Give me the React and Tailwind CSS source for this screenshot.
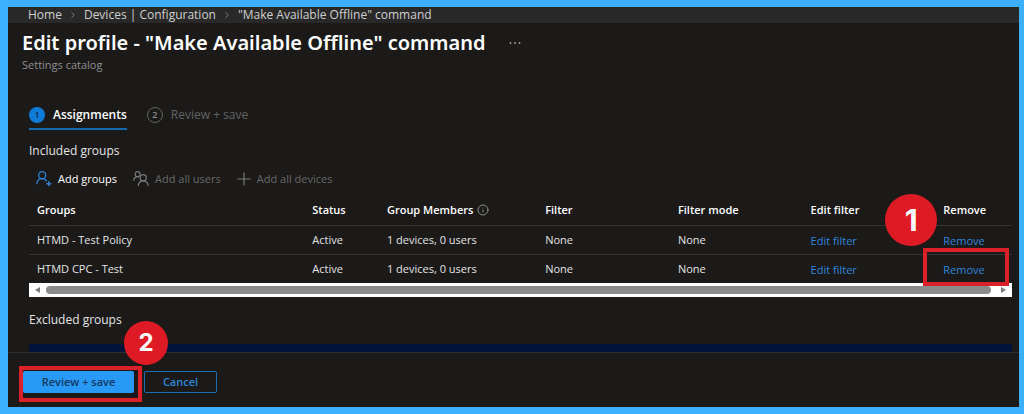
import { ChevronRight, Info } from "lucide-react";

const rows = [
  { name: "HTMD - Test Policy", highlighted: false },
  { name: "HTMD CPC - Test", highlighted: true },
];

function AddGroupIcon() {
  return (
    <svg className="size-4 text-[#2f86d8]" viewBox="0 0 16 16" fill="none" stroke="currentColor" strokeWidth="1.3" aria-hidden="true">
      <circle cx="6.200" cy="4.200" r="3.500" />
      <path d="M0.800 13.300C1 10 3 7.700 6.200 7.700c2 0 3.600 1 4.500 2.700" />
      <path d="M12.800 10.300v4.800M10.400 12.700h4.800" strokeWidth="1.500" />
    </svg>
  );
}

function AddUsersIcon() {
  return (
    <svg className="size-4 text-[#7a7a7a]" viewBox="0 0 16 16" fill="none" stroke="currentColor" strokeWidth="1.2" aria-hidden="true">
      <circle cx="4.600" cy="3.200" r="2.500" />
      <circle cx="10.200" cy="6.800" r="3.100" />
      <path d="M0.700 9.800C0.900 7.400 2.300 5.700 4.600 5.700h1.300" />
      <path d="M5.200 15c.300-3 2-5.100 5-5.100s4.700 2.100 5 5.100" />
    </svg>
  );
}

function PlusIcon() {
  return (
    <svg className="size-3.5 text-[#7a7a7a]" viewBox="0 0 14 14" fill="none" stroke="currentColor" strokeWidth="1.200" aria-hidden="true">
      <path d="M7 0.500v13M0.500 7h13" />
    </svg>
  );
}

export default function App() {
  return (
    <div className="flex h-screen flex-col border-y-7 border-l-8 border-r-5 border-[#3cb0ff] bg-[#1b1a19] font-['Open_Sans','Noto_Sans',sans-serif] text-xs text-[#e4e4e4]">
      <nav aria-label="Breadcrumb" className="flex h-4 shrink-0 items-center gap-1.5 bg-[#292929] pl-5 text-[#cfcfcf]">
        <a href="#home">Home</a>
        <ChevronRight className="size-2.5 text-[#8a8a8a]" />
        <a href="#configuration">Devices | Configuration</a>
        <ChevronRight className="size-2.5 text-[#8a8a8a]" />
        <span>"Make Available Offline" command</span>
      </nav>

      <main className="flex min-h-0 flex-1 flex-col overflow-hidden">
        <header className="pl-[14px] pt-2">
          <div className="flex items-center gap-6">
            <h1 className="font-['Noto_Sans','Open_Sans',sans-serif] text-xl leading-6 font-semibold text-white">Edit profile - "Make Available Offline" command</h1>
            <button type="button" aria-label="More actions" className="text-[#a0a0a0]">
              <svg className="h-1 w-3" viewBox="0 0 12 4" fill="currentColor">
                <circle cx="1.500" cy="2" r="0.900" />
                <circle cx="6" cy="2" r="0.900" />
                <circle cx="10.500" cy="2" r="0.900" />
              </svg>
            </button>
          </div>
          <p className="pt-0.5 text-[11px] leading-4 text-[#8f8f8f]">Settings catalog</p>
        </header>

        <div className="pl-[21px] pr-[7px] pt-[34px]">
          <div role="tablist" className="flex gap-5">
            <button type="button" role="tab" aria-selected="true" className="flex h-[23px] items-start gap-2 border-b-2 border-[#1169b0] font-semibold text-white">
              <span className="flex size-4 items-center justify-center rounded-full bg-[#0f7bd8] text-[9px] text-[#12304a]">1</span>
              Assignments
            </button>
            <button type="button" role="tab" aria-selected="false" className="flex h-[23px] items-start gap-2 text-[#626262]">
              <span className="flex size-4 items-center justify-center rounded-full border border-[#626262] text-[9px] font-semibold text-[#8a8a8a]">2</span>
              Review + save
            </button>
          </div>

          <h2 className="pt-[13px] leading-4">Included groups</h2>

          <div className="flex gap-4 pl-[7px] pt-3">
            <button type="button" className="flex items-center gap-1.5 text-[11px] leading-4 font-medium text-white">
              <AddGroupIcon />
              Add groups
            </button>
            <button type="button" disabled className="flex items-center gap-1.5 text-[11px] leading-4 text-[#686868]">
              <AddUsersIcon />
              Add all users
            </button>
            <button type="button" disabled className="flex items-center gap-1.5 text-[11px] leading-4 text-[#686868]">
              <PlusIcon />
              Add all devices
            </button>
          </div>

          <table className="mt-2 w-full table-fixed text-left text-[11px] leading-4">
            <thead>
              <tr className="h-[30px] border-b border-[#343332] text-white">
                <th scope="col" className="w-[28%] pl-2 font-semibold">Groups</th>
                <th scope="col" className="w-[7.6%] pl-2 font-semibold">Status</th>
                <th scope="col" className="w-[16.1%] pl-2 font-semibold">
                  <span className="flex items-center gap-1">
                    Group Members
                    <Info className="size-3 text-[#9a9a9a]" strokeWidth={1.8} />
                  </span>
                </th>
                <th scope="col" className="w-[13.5%] pl-2 font-semibold">Filter</th>
                <th scope="col" className="w-[13.5%] pl-2 font-semibold">Filter mode</th>
                <th scope="col" className="w-[13.5%] pl-2 font-semibold">Edit filter</th>
                <th scope="col" className="relative pl-2 font-semibold">
                  Remove
                  <span className="absolute -left-[50px] -top-px flex size-[52px] items-center justify-center rounded-full bg-[#de1b24] font-['Inter','Liberation_Sans',sans-serif] text-3xl font-bold text-white">
                    1
                  </span>
                </th>
              </tr>
            </thead>
            <tbody>
              {rows.map((row) => (
                <tr key={row.name} className="h-[29px] border-b border-[#343332] last:border-b-0">
                  <td className="pl-2">{row.name}</td>
                  <td className="pl-2">Active</td>
                  <td className="pl-2">1 devices, 0 users</td>
                  <td className="pl-2">None</td>
                  <td className="pl-2">None</td>
                  <td className="pl-2 pt-0.5">
                    <a href="#edit-filter" className="text-[#2f86dc]">Edit filter</a>
                  </td>
                  <td className="relative pl-2 pt-0.5">
                    <a href="#remove" className="text-[#2f86dc]">Remove</a>
                    {row.highlighted && <span className="absolute -left-3 -top-[7px] z-10 h-[38px] w-[86px] border-4 border-[#da2029]" />}
                  </td>
                </tr>
              ))}
            </tbody>
          </table>

          <div className="flex h-3.5 items-center gap-1.5 bg-white px-1.5">
            <svg className="h-1.5 w-[5px] text-[#7d7d7d]" viewBox="0 0 5 6" fill="currentColor" aria-hidden="true">
              <path d="M5 0v6L0 3z" />
            </svg>
            <div className="h-2 flex-1 rounded-full bg-[#8b8b8b]" />
            <svg className="ml-1 h-1.5 w-[5px] text-[#7d7d7d]" viewBox="0 0 5 6" fill="currentColor" aria-hidden="true">
              <path d="M0 0v6l5-3z" />
            </svg>
          </div>

          <h2 className="pt-[15px] leading-4">Excluded groups</h2>
          <div className="mt-4 h-8 bg-[#00143a]" />
        </div>
      </main>

      <footer className="flex h-[55px] shrink-0 items-center gap-2.5 border-t border-[#2c2e31] pl-[15px] pt-1 text-[11px] font-semibold">
        <div className="relative">
          <button type="button" className="h-[22px] w-[111px] rounded-xs bg-[#2899f5] text-[#123a5e]">Review + save</button>
          <span className="absolute -left-1 -top-[5px] h-9 w-[123px] border-4 border-[#da2029]" />
          <span className="absolute -top-[50px] left-[101px] flex size-11 items-center justify-center rounded-full bg-[#de1b24] font-['Inter','Liberation_Sans',sans-serif] text-2xl font-bold text-white">
            2
          </span>
        </div>
        <button type="button" className="h-[22px] w-[73px] rounded-xs border border-[#1d6db3] text-[#2e86d6]">Cancel</button>
      </footer>
    </div>
  );
}
